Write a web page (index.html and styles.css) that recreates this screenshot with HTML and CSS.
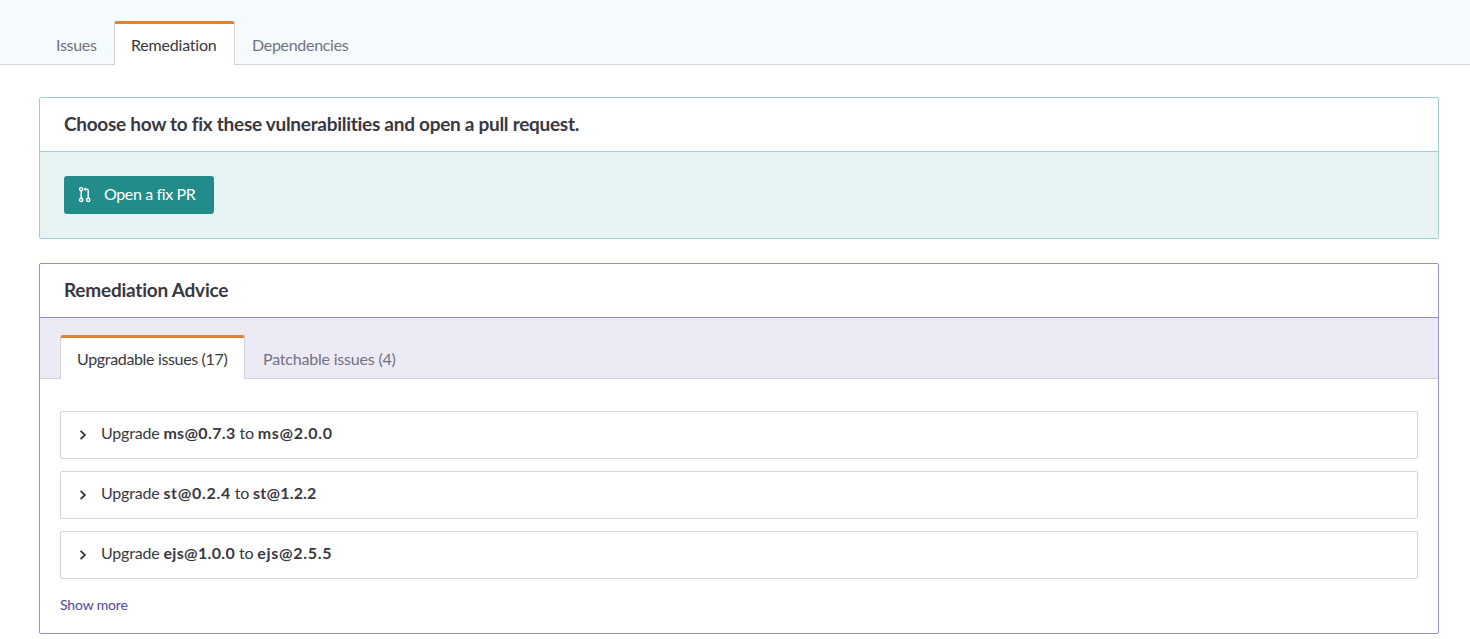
FILE: index.html
```html
<!DOCTYPE html>
<html lang="en">
<head>
<meta charset="utf-8">
<title>Remediation</title>
<link rel="stylesheet" href="styles.css">
</head>
<body>
<nav class="tabs page-tabs">
  <a class="tab tab-issues">Issues</a>
  <a class="tab tab-remediation active">Remediation</a>
  <a class="tab tab-dependencies">Dependencies</a>
</nav>
<main class="content">
  <section class="card card-fix">
    <h2 class="card-title title-fix">Choose how to fix these vulnerabilities and open a pull request.</h2>
    <div class="fix-body">
      <button class="fix-button">
        <svg class="pr-icon" width="14" height="18" viewBox="0 0 14 18" fill="none" stroke="currentColor" stroke-width="1.4">
          <circle cx="3.2" cy="3.2" r="1.6"/>
          <circle cx="3.2" cy="13.9" r="1.6"/>
          <circle cx="10.2" cy="13.9" r="1.6"/>
          <path d="M3.2 4.8v7.5M6.2 3.2h2.6q1.4 0 1.4 1.4v7.7"/>
          <path d="M5.6 3.2l2.3-2v4z" fill="currentColor" stroke="none"/>
        </svg>
        <span>Open a fix PR</span>
      </button>
    </div>
  </section>
  <section class="card card-advice">
    <h2 class="card-title title-advice">Remediation Advice</h2>
    <nav class="tabs advice-tabs">
      <a class="tab tab-upgradable active">Upgradable issues (17)</a>
      <a class="tab tab-patchable">Patchable issues (4)</a>
    </nav>
    <div class="advice-body">
      <div class="row">
        <svg class="chevron" width="8" height="12" viewBox="0 0 8 12"><path d="M1.6 1.8L5.9 6l-4.3 4.2"/></svg>
        <p>Upgrade <strong>ms@0.7.3</strong> to <strong class="wide">ms@2.0.0</strong></p>
      </div>
      <div class="row">
        <svg class="chevron" width="8" height="12" viewBox="0 0 8 12"><path d="M1.6 1.8L5.9 6l-4.3 4.2"/></svg>
        <p>Upgrade <strong class="wide">st@0.2.4</strong> to <strong class="narrow">st@1.2.2</strong></p>
      </div>
      <div class="row">
        <svg class="chevron" width="8" height="12" viewBox="0 0 8 12"><path d="M1.6 1.8L5.9 6l-4.3 4.2"/></svg>
        <p>Upgrade <strong>ejs@1.0.0</strong> to <strong class="wide">ejs@2.5.5</strong></p>
      </div>
      <a class="show-more">Show more</a>
    </div>
  </section>
</main>
</body>
</html>
```

FILE: styles.css
```css
* { box-sizing: border-box; }
body {
  margin: 0;
  background: #fff;
  color: #393842;
  font: 16px/20px Lato, "Liberation Sans", sans-serif;
  font-variant-ligatures: none;
}
.tabs {
  display: flex;
  align-items: flex-end;
  border-bottom: 1px solid #d3d3d9;
}
.page-tabs { height: 65px; padding-left: 39px; background: #f5fafd; }
.tab {
  height: 44px;
  margin-bottom: -1px;
  padding: 11px 0 0 17px;
  border-top: 3px solid transparent;
  color: #727184;
  letter-spacing: -0.3px;
  white-space: nowrap;
}
.tab.active {
  padding-left: 16px;
  border: 1px solid #d3d3d9;
  border-top: 3px solid #de842e;
  border-bottom: 0;
  border-radius: 3px 3px 0 0;
  background: #fff;
  color: #393842;
}
.tab-issues { width: 75px; }
.tab-remediation { width: 121px; letter-spacing: -0.2px; }
.tab-upgradable { width: 185px; letter-spacing: -0.34px; }
.tab-patchable { padding-left: 18px; letter-spacing: -0.2px; }
.content {
  display: flex;
  flex-direction: column;
  gap: 24px;
  padding: 32px 31px 5px 39px;
}
.card { border: 1px solid #9fcfce; border-radius: 2px; }
.card-fix { height: 142px; display: flex; flex-direction: column; }
.card-advice { height: 371px; border-color: #9390c9; }
.card-title {
  margin: 0;
  height: 54px;
  padding: 14px 0 0 24px;
  border-bottom: 1px solid #9fcfce;
  font-size: 19px;
  line-height: 24px;
  font-weight: 700;
  letter-spacing: -0.28px;
  white-space: nowrap;
}
.title-advice { border-color: #9390c9; letter-spacing: -0.22px; }
.fix-body { flex: 1; padding: 24px; background: #e7f3f3; }
.fix-button {
  display: flex;
  align-items: center;
  gap: 12px;
  width: 150px;
  height: 38px;
  padding: 0 0 2px 14px;
  border: 0;
  border-radius: 3px;
  background: #228c8a;
  color: #fff;
  font: inherit;
  letter-spacing: -0.38px;
  white-space: nowrap;
}
.pr-icon { margin-top: 2px; }
.advice-tabs { height: 61px; padding-left: 20px; background: #eceaf5; }
.advice-body {
  display: flex;
  flex-direction: column;
  gap: 12px;
  padding: 32px 20px 0;
}
.row {
  display: flex;
  height: 48px;
  padding: 11px 0 0 18px;
  gap: 14px;
  border: 1px solid #d3d3d9;
  border-radius: 2px;
}
.row p { margin: 0; letter-spacing: -0.2px; white-space: nowrap; }
.row strong { font-weight: 700; letter-spacing: 0.35px; }
.row .wide { letter-spacing: 0.7px; }
.row .narrow { letter-spacing: 0.2px; }
.chevron { margin-top: 6px; fill: none; stroke: #393842; stroke-width: 1.8; }
.show-more { margin-top: 4px; color: #4b45a1; font-size: 14px; letter-spacing: -0.15px; }
```
